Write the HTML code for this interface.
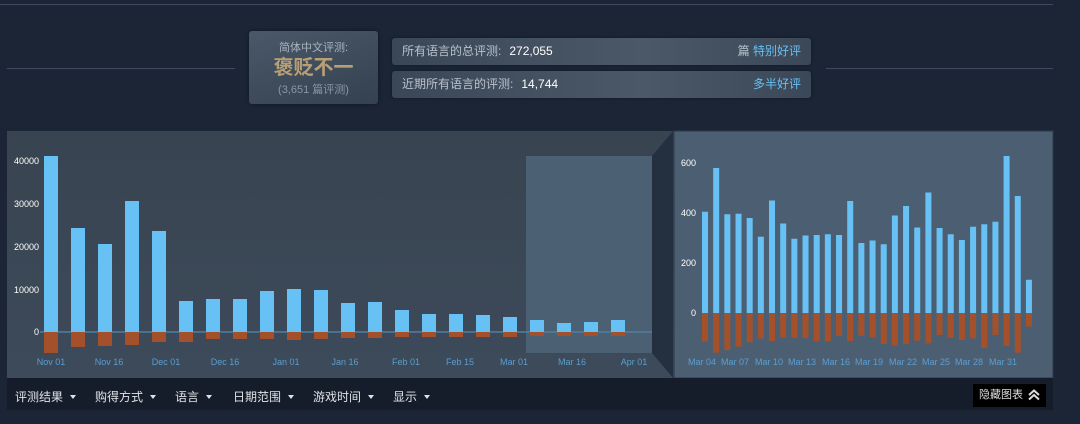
<!DOCTYPE html>
<html><head><meta charset="utf-8"><style>
*{margin:0;padding:0;box-sizing:border-box}
body{width:1080px;height:424px;background:#1b2535;font-family:"Liberation Sans","Noto Sans CJK SC",sans-serif;position:relative;overflow:hidden;color:#fff}
.abs{position:absolute}
.line{position:absolute;height:1px;background:#3d4c5e}
.lbox{left:249px;top:31px;width:129px;height:73px;background:linear-gradient(160deg,#4a5869,#34414f);border-radius:3px;text-align:center;box-shadow:0 0 4px rgba(0,0,0,.4)}
.rbox{left:392px;width:419px;height:27px;background:linear-gradient(90deg,#3a4757,#4b5868 60%,#3b4858);border-radius:3px;font-size:12px;line-height:27px;padding:0 10px;box-shadow:0 0 3px rgba(0,0,0,.4)}
.rbox .k{color:#b9c2cb}.rbox .v{color:#fff;margin-left:8px}.rbox .r{position:absolute;right:0;padding-right:0;color:#66c0f4;right:10px;top:0}
.bar{left:7px;top:378px;width:1046px;height:32px;background:#141d29}
.menu{position:absolute;top:388px;font-size:12px;color:#dfe3e6}
.tri{display:inline-block;width:0;height:0;border-left:3.5px solid transparent;border-right:3.5px solid transparent;border-top:4px solid #dfe3e6;margin-left:7px;vertical-align:2px}
</style></head><body>
<div class="line" style="left:0;top:4px;width:1053px"></div>
<div class="line" style="left:7px;top:68px;width:228px"></div>
<div class="line" style="left:826px;top:68px;width:227px"></div>
<div class="abs lbox">
 <div style="font-size:11px;color:#aab4bf;margin-top:8px">简体中文评测:</div>
 <div style="font-size:20px;font-weight:bold;color:#b9a074;margin-top:1px;line-height:24px">褒贬不一</div>
 <div style="font-size:11px;color:#8c97a3;margin-top:1px">(3,651 篇评测)</div>
</div>
<div class="abs rbox" style="top:38px"><span class="k">所有语言的总评测:</span><span class="v">272,055</span><span class="r"><span style="color:#b9c2cb">篇 </span>特别好评</span></div>
<div class="abs rbox" style="top:71px"><span class="k">近期所有语言的评测:</span><span class="v">14,744</span><span class="r">多半好评</span></div>

<svg class="abs" style="left:0;top:0" width="1080" height="424" id="s">
<defs><linearGradient id="g1" x1="0" y1="0" x2="0" y2="1"><stop offset="0" stop-color="#384450"/><stop offset="1" stop-color="#3d4a5a"/></linearGradient></defs>
<rect x="7" y="131" width="667" height="247" fill="url(#g1)"/>
<rect x="526" y="156" width="126" height="197" fill="#4c6073"/>
<polygon points="652,156 673,131 673,378 652,353" fill="#243040"/>
<rect x="674" y="131" width="379" height="247" fill="#4c5f72"/>
<rect x="674" y="131" width="379" height="247" fill="none" stroke="#2b3a4b" stroke-width="1"/>
<line x1="40" y1="332" x2="652" y2="332" stroke="#4f7fa3" stroke-width="1.5"/>
<g id="L"></g><g id="R"></g>
<g font-size="9" fill="#fff" text-anchor="end">
<text x="39" y="164">40000</text><text x="39" y="207">30000</text><text x="39" y="250">20000</text><text x="39" y="293">10000</text><text x="39" y="335">0</text>
<text x="696" y="166">600</text><text x="696" y="216">400</text><text x="696" y="266">200</text><text x="696" y="316">0</text>
</g>
<g font-size="9" fill="#5a9fd0" text-anchor="middle">
<text x="51" y="365">Nov 01</text><text x="109" y="365">Nov 16</text><text x="166" y="365">Dec 01</text><text x="225" y="365">Dec 16</text><text x="286" y="365">Jan 01</text><text x="345" y="365">Jan 16</text><text x="406" y="365">Feb 01</text><text x="460" y="365">Feb 15</text><text x="514" y="365">Mar 01</text><text x="572" y="365">Mar 16</text><text x="634" y="365">Apr 01</text>
<text x="702" y="365">Mar 04</text><text x="735" y="365">Mar 07</text><text x="769" y="365">Mar 10</text><text x="802" y="365">Mar 13</text><text x="836" y="365">Mar 16</text><text x="869" y="365">Mar 19</text><text x="903" y="365">Mar 22</text><text x="936" y="365">Mar 25</text><text x="969" y="365">Mar 28</text><text x="1003" y="365">Mar 31</text>
</g>
</svg>
<div class="abs bar"></div>
<div class="menu" style="left:15px">评测结果<span class="tri"></span></div>
<div class="menu" style="left:95px">购得方式<span class="tri"></span></div>
<div class="menu" style="left:175px">语言<span class="tri"></span></div>
<div class="menu" style="left:233px">日期范围<span class="tri"></span></div>
<div class="menu" style="left:313px">游戏时间<span class="tri"></span></div>
<div class="menu" style="left:393px">显示<span class="tri"></span></div>
<div class="abs" style="left:973px;top:384px;width:73px;height:23px;background:#000;font-size:11px;line-height:23px;padding-left:6px;color:#ddd">隐藏图表<svg style="position:absolute;right:6px;top:5px" width="12" height="12" viewBox="0 0 12 12"><path d="M1 6 L6 1.5 L11 6 M1 10.5 L6 6 L11 10.5" stroke="#ddd" stroke-width="2" fill="none"/></svg></div>
<script>
var ns="http://www.w3.org/2000/svg";
function r(g,x,y,w,h,c){var e=document.createElementNS(ns,"rect");e.setAttribute("x",x);e.setAttribute("y",y);e.setAttribute("width",w);e.setAttribute("height",h);e.setAttribute("fill",c);document.getElementById(g).appendChild(e);}
var lt=[156,228,244,201,231,301,299,299,291,289,290,303,302,310,314,314,315,317,320,323,322,320];
var lb=[353,347,346,345,342,342,339,339,339,340,339,338,338,337,337,337,337,337,336,336,336,336];
for(var i=0;i<22;i++){var x=44+i*27;r("L",x,lt[i],14,332-lt[i],"#67c1f5");r("L",x,332,14,lb[i]-332,"#a4512b");}
var rv=[405,580,395,397,380,305,450,358,297,310,312,315,312,448,280,290,275,390,428,342,482,340,315,292,345,355,365,628,468,133];
var rn=[635,668,660,650,637,625,633,622,623,624,634,634,618,633,617,622,642,646,642,632,640,615,624,630,625,654,615,648,668,590];
for(var i=0;i<30;i++){var x=702+i*11.17;var h=rv[i]*0.25;r("R",x,313-h,6,h,"#67c1f5");var n=(rn[i]-549)/3;r("R",x,313,6,n,"#a4512b");}
</script>
</body></html>
